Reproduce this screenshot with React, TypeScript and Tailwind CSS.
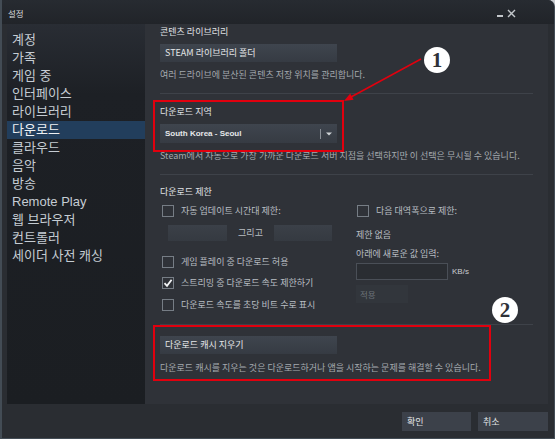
import React from 'react';

const navItems = [
  '계정',
  '가족',
  '게임 중',
  '인터페이스',
  '라이브러리',
  '다운로드',
  '클라우드',
  '음악',
  '방송',
  'Remote Play',
  '웹 브라우저',
  '컨트롤러',
  '세이더 사전 캐싱',
];

function Checkbox({ checked = false }: { checked?: boolean }) {
  return (
    <div className="w-[12px] h-[12px] shrink-0 border border-[#767d85] flex items-center justify-center">
      {checked && (
        <svg width="10" height="10" viewBox="0 0 10 10">
          <path d="M1.5 5.2 L4 7.8 L8.6 1.8" fill="none" stroke="#f2f4f5" strokeWidth="1.8" />
        </svg>
      )}
    </div>
  );
}

function CheckRow({ label, checked }: { label: string; checked?: boolean }) {
  return (
    <div className="h-[14px] flex items-center gap-[7px]">
      <Checkbox checked={checked} />
      <span className="text-[9px] leading-[12px] text-[#b9bec3] whitespace-nowrap">{label}</span>
    </div>
  );
}

function Heading({ children, className = '' }: { children: React.ReactNode; className?: string }) {
  return <div className={`h-[12px] leading-[12px] text-[9px] text-[#e0e3e6] ${className}`}>{children}</div>;
}

function Desc({ children, className = '' }: { children: React.ReactNode; className?: string }) {
  return (
    <div className={`h-[12px] leading-[12px] text-[9px] text-[#a4a9ae] whitespace-nowrap ${className}`}>
      {children}
    </div>
  );
}

function Sep({ className = '' }: { className?: string }) {
  return <div className={`h-px bg-[#3e4249] ${className}`} />;
}

function Button({ children, className = '' }: { children: React.ReactNode; className?: string }) {
  return (
    <div
      className={`w-[177px] h-[18px] flex items-center pl-[5px] bg-gradient-to-b from-[#3f454e] to-[#363b43] text-[9px] text-[#e4e6e8] ${className}`}
    >
      {children}
    </div>
  );
}

export default function App() {
  return (
    <div className="relative w-[555px] h-[439px] bg-[#c9ccd0] font-['Noto_Sans_CJK_KR',sans-serif]">
      <div className="w-full h-full flex flex-col bg-[#2a2d32] rounded-tr-[7px] border-l-2 border-r border-b border-[#434c55] overflow-hidden">
        {/* title bar */}
        <div className="h-[24px] shrink-0 flex items-center justify-between pl-[6px] pr-[38px] bg-gradient-to-b from-[#272b31] to-[#212429]">
          <span className="text-[8.5px] text-[#d6d9dc] leading-none pt-[2px]">설정</span>
          <div className="flex items-end gap-[4px] pt-[2px]">
            <div className="w-[6px] h-[1.5px] bg-[#c3c7cb] mb-[1px]" />
            <svg width="9" height="9" viewBox="0 0 9 9">
              <path d="M1 1 L8 8 M8 1 L1 8" stroke="#c3c7cb" strokeWidth="1.4" />
            </svg>
          </div>
        </div>

        <div className="flex h-[380px] shrink-0 pl-[5px] pr-[6px]">
          {/* sidebar */}
          <div className="w-[138px] shrink-0 pt-[7px] bg-[linear-gradient(to_bottom,#292d34,#1d2025_70px,#1b1e22)] font-['Liberation_Sans','Noto_Sans_CJK_KR',sans-serif]">
            {navItems.map((item) => (
              <div
                key={item}
                className={`h-[18px] leading-[18px] pl-[5px] text-[13px] whitespace-nowrap ${
                  item === '다운로드' ? 'bg-[#223e5c] text-[#eef1f4]' : 'text-[#c5ccd3]'
                }`}
              >
                {item}
              </div>
            ))}
          </div>

          {/* content */}
          <div className="flex-1 bg-[#2f3238] pl-[15px] pr-[15px] pt-[2px]">
            <Heading>콘텐츠 라이브러리</Heading>
            <Button className="mt-[6px]">STEAM 라이브러리 폴더</Button>
            <Desc className="mt-[7px]">여러 드라이브에 분산된 콘텐츠 저장 위치를 관리합니다.</Desc>
            <Sep className="mt-[12px]" />

            <Heading className="mt-[12px]">다운로드 지역</Heading>
            <div className="mt-[6px] w-[177px] h-[19px] flex items-center pl-[5px] bg-gradient-to-b from-[#3f454e] to-[#363b43]">
              <span className="flex-1 font-['Liberation_Sans',sans-serif] font-bold text-[8px] text-[#e6e8ea] whitespace-nowrap">
                South Korea - Seoul
              </span>
              <div className="w-px h-[10px] bg-[#8a8f96]" />
              <svg width="16" height="6" viewBox="0 0 16 6" className="shrink-0">
                <path d="M5 1.5 L11 1.5 L8 4.5 Z" fill="#d0d3d6" />
              </svg>
            </div>
            <Desc className="mt-[7px]">
              Steam에서 자동으로 가장 가까운 다운로드 서버 지점을 선택하지만 이 선택은 무시될 수 있습니다.
            </Desc>
            <Sep className="mt-[12px]" />

            <Heading className="mt-[11px]">다운로드 제한</Heading>
            <div className="mt-[6px] flex">
              <div className="w-[196px] shrink-0 pl-[2px]">
                <CheckRow label="자동 업데이트 시간대 제한:" />
                <div className="mt-[7px] ml-[6px] flex items-center h-[16px]">
                  <div className="w-[59px] h-[16px] bg-gradient-to-b from-[#3b4048] to-[#353a41]" />
                  <span className="w-[47px] text-center text-[9px] text-[#b9bec3]">그리고</span>
                  <div className="w-[58px] h-[16px] bg-gradient-to-b from-[#3b4048] to-[#353a41]" />
                </div>
                <div className="mt-[14px]">
                  <CheckRow label="게임 플레이 중 다운로드 허용" />
                </div>
                <div className="mt-[7px]">
                  <CheckRow label="스트리밍 중 다운로드 속도 제한하기" checked />
                </div>
                <div className="mt-[8px]">
                  <CheckRow label="다운로드 속도를 초당 비트 수로 표시" />
                </div>
              </div>

              <div className="flex-1">
                <div className="pl-[1px]">
                  <CheckRow label="다음 대역폭으로 제한:" />
                </div>
                <div className="mt-[11px] h-[12px] leading-[12px] text-[9px] text-[#b9bec3]">제한 없음</div>
                <div className="mt-[7px] h-[12px] leading-[12px] text-[9px] text-[#b9bec3]">아래에 새로운 값 입력:</div>
                <div className="mt-[3px] flex items-center gap-[4px]">
                  <div className="w-[92px] h-[17px] border border-[#4a4f57] bg-[#2a2d32]" />
                  <span className="font-['Liberation_Sans',sans-serif] text-[8px] text-[#c9cdd1]">KB/s</span>
                </div>
                <div className="mt-[5px] w-[52px] h-[18px] flex items-center pl-[4px] bg-[#32363c] text-[8.5px] text-[#6c7279]">
                  적용
                </div>
              </div>
            </div>
            <Sep className="mt-[12px]" />

            <Button className="mt-[11px]">다운로드 캐시 지우기</Button>
            <Desc className="mt-[8px]">
              다운로드 캐시를 지우는 것은 다운로드하거나 앱을 시작하는 문제를 해결할 수 있습니다.
            </Desc>
          </div>
        </div>

        {/* footer */}
        <div className="flex-1 flex justify-end items-start gap-[7px] pt-[8px] pr-[6px]">
          <div className="w-[69px] h-[19px] flex items-center pl-[5px] bg-[#3c414a] text-[9px] text-[#e0e3e6]">확인</div>
          <div className="w-[70px] h-[19px] flex items-center pl-[5px] bg-[#3c414a] text-[9px] text-[#e0e3e6]">취소</div>
        </div>
      </div>

      {/* annotations */}
      <div className="absolute left-[153px] top-[100px] w-[191px] h-[52px] border-2 border-[#e1000e] pointer-events-none" />
      <div className="absolute left-[153px] top-[325px] w-[338px] h-[56px] border-2 border-[#e1000e] pointer-events-none" />
      <svg className="absolute left-0 top-0 pointer-events-none" width="555" height="439" viewBox="0 0 555 439">
        <line x1="421" y1="59" x2="351" y2="97" stroke="#e1000e" strokeWidth="1.5" />
        <polygon points="344,101 353.6,99.8 350.2,93.6" fill="#e1000e" />
      </svg>
      <div className="absolute left-[424px] top-[47px] w-[26px] h-[26px] rounded-full bg-white flex items-center justify-center font-['Liberation_Serif',serif] font-bold text-[21px] leading-none text-[#2f3238]">
        1
      </div>
      <div className="absolute left-[492px] top-[297px] w-[26px] h-[26px] rounded-full bg-white flex items-center justify-center font-['Liberation_Serif',serif] font-bold text-[21px] leading-none text-[#2f3238]">
        2
      </div>
    </div>
  );
}
